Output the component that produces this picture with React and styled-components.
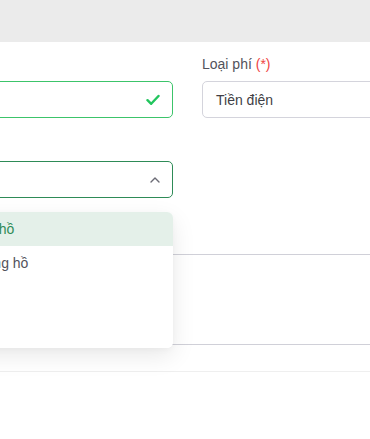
import React from "react";
import styled, { createGlobalStyle } from "styled-components";

const Global = createGlobalStyle`
  html, body { margin: 0; padding: 0; background: #fff; overflow: hidden; }
  body { font-family: "Liberation Sans", Arial, sans-serif; font-size: 14px; }
  * { box-sizing: border-box; }
`;

const Page = styled.div`
  width: 370px;
  height: 439px;
  overflow: hidden;
  background: #fff;
`;

const TopBar = styled.div`
  height: 42px;
  background: #ebebeb;
`;

const Form = styled.div`
  display: grid;
  grid-template-columns: 243px 200px;
  column-gap: 29px;
  row-gap: 16px;
  margin-left: -70px;
  padding-top: 12px;
  padding-bottom: 26px;
`;

const Field = styled.div`
  display: flex;
  flex-direction: column;
  grid-column: ${(p) => (p.$wide ? "1 / span 2" : "auto")};
  margin-top: ${(p) => p.$offset || 0}px;
  position: relative;
`;

const Label = styled.div`
  height: 20px;
  line-height: 20px;
  margin-bottom: 7px;
  color: #52525b;
  font-size: 14px;
  white-space: nowrap;
`;

const Req = styled.span`
  color: #ef4444;
`;

const InputBox = styled.div`
  height: 37px;
  display: flex;
  align-items: center;
  justify-content: space-between;
  padding: 0 12px 0 13px;
  border: 1px solid ${(p) => p.$border || "#d4d4dc"};
  border-radius: 5px;
  background: #fff;
  color: #3f3f46;
  font-size: 14px;
`;

const TextArea = styled.div`
  height: 91px;
  border: 1px solid #d0d0d8;
  border-radius: 5px;
  background: #fff;
`;

const Menu = styled.div`
  position: absolute;
  left: 0;
  right: 0;
  top: calc(100% + 14px);
  background: #fff;
  border-radius: 6px;
  box-shadow: 0 8px 24px rgba(0, 0, 0, 0.09), 0 2px 6px rgba(0, 0, 0, 0.03);
  overflow: hidden;
  z-index: 5;
`;

const Item = styled.div`
  height: 34px;
  line-height: 34px;
  padding-left: 12px;
  font-size: 14px;
  white-space: nowrap;
  color: ${(p) => (p.$active ? "#2e8b57" : "#52525b")};
  background: ${(p) => (p.$active ? "#e4f0e9" : "#fff")};
`;

const Divider = styled.div`
  height: 1px;
  background: #efefef;
`;

const Check = () => (
  <svg width="14" height="12" viewBox="0 0 14 12" fill="none">
    <path d="M1.5 6.2 L5.2 9.8 L12.5 2" stroke="#22c55e" strokeWidth="2.4" strokeLinecap="round" strokeLinejoin="round" />
  </svg>
);

const ChevronUp = () => (
  <svg width="10" height="6" viewBox="0 0 10 6" fill="none">
    <path d="M1 5 L5 1 L9 5" stroke="#6b6b75" strokeWidth="1.4" strokeLinecap="round" strokeLinejoin="round" />
  </svg>
);

export default function App() {
  return (
    <Page>
      <Global />
      <TopBar />
      <Form>
        <Field>
          <Label>
            Phòng <Req>(*)</Req>
          </Label>
          <InputBox $border="#3cc46a">
            <span />
            <Check />
          </InputBox>
        </Field>
        <Field>
          <Label>
            Loại phí <Req>(*)</Req>
          </Label>
          <InputBox>Tiền điện</InputBox>
        </Field>
        <Field>
          <Label>Cách tính</Label>
          <InputBox $border="#2e8b57">
            <span />
            <ChevronUp />
          </InputBox>
          <Menu>
            <Item $active>Có đồng hồ</Item>
            <Item>Theo đồng hồ</Item>
            <Item>Cố định</Item>
            <Item>Khác</Item>
          </Menu>
        </Field>
        <Field />
        <Field $wide $offset={13}>
          <Label>Ghi chú</Label>
          <TextArea />
        </Field>
      </Form>
      <Divider />
    </Page>
  );
}
